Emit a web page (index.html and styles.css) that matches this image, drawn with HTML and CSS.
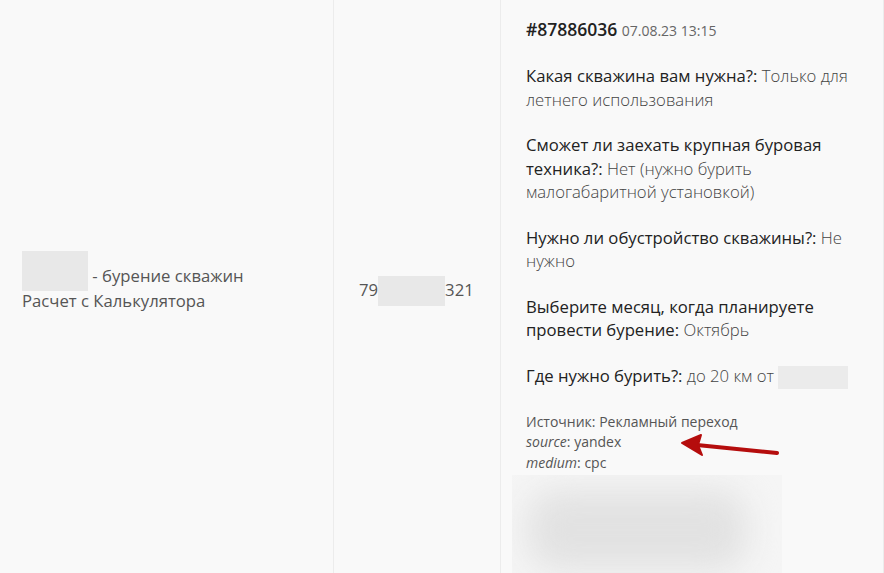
FILE: index.html
```html
<!DOCTYPE html>
<html lang="ru">
<head>
<meta charset="utf-8">
<link rel="stylesheet" href="styles.css">
</head>
<body>
<div class="table">
  <div class="col col-name">
    <div class="name-line"><span class="redact redact-name"></span> - бурение скважин</div>
    <div>Расчет с Калькулятора</div>
  </div>
  <div class="col col-phone">
    <div class="phone">79<span class="redact redact-phone"></span>321</div>
  </div>
  <div class="col col-info">
    <div class="head"><span class="num">#87886036</span> <span class="date">07.08.23 13:15</span></div>
    <p class="qa"><span class="q">Какая скважина вам нужна?:</span> <span class="a">Только для летнего использования</span></p>
    <p class="qa"><span class="q">Сможет ли заехать крупная буровая техника?:</span> <span class="a">Нет (нужно бурить малогабаритной установкой)</span></p>
    <p class="qa"><span class="q">Нужно ли обустройство скважины?:</span> <span class="a">Не нужно</span></p>
    <p class="qa"><span class="q">Выберите месяц, когда планируете провести бурение:</span> <span class="a">Октябрь</span></p>
    <p class="qa"><span class="q">Где нужно бурить?:</span> <span class="a">до 20 км от</span> <span class="redact redact-place"></span></p>
    <div class="source">
      <div>Источник: Рекламный переход</div>
      <div><em>source</em>: yandex</div>
      <div><em>medium</em>: cpc</div>
      <svg class="arrow" width="110" height="30" viewBox="0 0 110 30">
        <path d="M104 20 L24 12" stroke="#b50d0d" stroke-width="4" stroke-linecap="round" fill="none"/>
        <path d="M9 10 L28 2 L25 12 L29 22 Z" fill="#b50d0d" stroke="#b50d0d" stroke-width="2" stroke-linejoin="round"/>
      </svg>
    </div>
    <div class="blurbox"><div class="blurinner"></div></div>
  </div>
</div>
</body>
</html>
```
FILE: styles.css
```css
html, body {
  margin: 0;
  padding: 0;
  background: #f9f9f9;
}
body {
  font-family: "Open Sans", "Noto Sans", sans-serif;
  font-size: 16.7px;
  color: #444;
  width: 884px;
  height: 573px;
  overflow: hidden;
}
.table {
  display: flex;
  height: 573px;
}
.col {
  box-sizing: border-box;
  border-right: 1px solid #ececec;
}
.col-name {
  width: 334px;
  padding: 0 22px;
  display: flex;
  flex-direction: column;
  justify-content: center;
  line-height: 24px;
  color: #555;
  padding-top: 4px;
}
.col-phone {
  width: 167px;
  padding: 0 25px;
  display: flex;
  flex-direction: column;
  justify-content: center;
  color: #555;
  padding-top: 8px;
}
.col-info {
  width: 383px;
  padding: 15px 20px 0 25px;
  position: relative;
  color: #333;
}
.redact {
  display: inline-block;
  background: #e8e8e8;
  vertical-align: middle;
}
.redact-name {
  width: 66px;
  height: 40px;
  margin: -8px 0;
  position: relative;
  top: -6px;
}
.redact-phone {
  width: 67px;
  height: 30px;
  margin: -3px 0;
}
.redact-place {
  width: 70px;
  height: 23px;
  background: #ebebeb;
}
.phone {
  line-height: 24px;
}
.head {
  line-height: 28px;
  margin-bottom: 19px;
}
.num {
  font-weight: 600;
  font-size: 17.5px;
  color: #222;
}
.date {
  font-size: 14px;
  color: #666;
}
.qa {
  margin: 0 0 22px 0;
  line-height: 23.5px;
}
.q {
  font-weight: 500;
  color: #222;
}
.a {
  font-weight: 300;
  color: #444;
}
.source {
  position: relative;
  font-size: 14px;
  line-height: 20.5px;
  color: #555;
  margin-top: 23px;
}
.source em {
  font-style: italic;
}
.arrow {
  position: absolute;
  left: 147px;
  top: 21px;
}
.blurbox {
  margin: 2px 0 0 -14px;
  width: 270px;
  height: 100px;
  background: #f5f5f5;
  overflow: hidden;
  position: relative;
}
.blurinner {
  position: absolute;
  left: 15px;
  top: 15px;
  width: 220px;
  height: 80px;
  background: #e2e2e2;
  border-radius: 30px;
  filter: blur(16px);
}
```
